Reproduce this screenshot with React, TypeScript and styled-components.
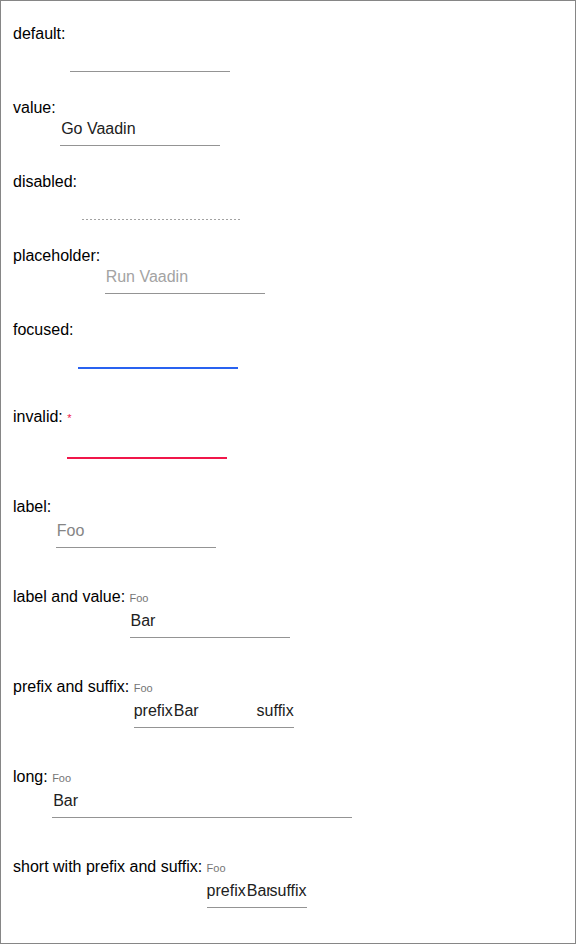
import React from "react";
import styled, { createGlobalStyle, css } from "styled-components";

const GlobalStyle = createGlobalStyle`
  html, body { margin: 0; padding: 0; background: #fff; }
  body { font-family: "Liberation Sans", Arial, sans-serif; }
`;

const Page = styled.div`
  box-sizing: border-box;
  width: 576px;
  height: 944px;
  border: 1px solid #868686;
  padding: 23px 12px 0 12px;
  display: flex;
  flex-direction: column;
  gap: 26px;
  font-family: "Liberation Sans", Arial, sans-serif;
  font-size: 16px;
  line-height: 20px;
  color: #000;
`;

const Row = styled.div<{ $labeled: boolean }>`
  display: flex;
  align-items: flex-start;
  gap: 0.278em;
  padding-top: ${(p) => (p.$labeled ? 13 : 0)}px;
`;

const RowTitle = styled.span`
  white-space: nowrap;
  line-height: 20px;
`;

const Field = styled.div<{ $width: number }>`
  display: flex;
  flex-direction: column;
  width: ${(p) => p.$width}px;
  flex: none;
`;

const FieldLabel = styled.div`
  height: 20px;
  line-height: 20px;
  font-size: 16px;
  white-space: nowrap;
`;

const SmallLabel = styled.span`
  font-size: 11px;
  line-height: 1;
  color: #757575;
`;

const Required = styled.span`
  font-size: 11px;
  line-height: 1;
  color: #f0174a;
`;

type Tone = "normal" | "focused" | "invalid" | "disabled";

const InputRow = styled.div<{ $tone: Tone; $labeled: boolean }>`
  display: flex;
  align-items: center;
  padding-top: ${(p) => (p.$labeled ? 4 : 1)}px;
  padding-bottom: 6px;
  border-bottom: 1px solid #949494;
  color: #212121;
  ${(p) =>
    p.$tone === "focused" &&
    css`
      border-bottom-color: #2962f0;
      box-shadow: 0 1px 0 #2962f0;
    `}
  ${(p) =>
    p.$tone === "invalid" &&
    css`
      border-bottom-color: #f0174a;
      box-shadow: 0 1px 0 #f0174a;
    `}
  ${(p) =>
    p.$tone === "disabled" &&
    css`
      border-bottom-color: transparent;
      background-image: repeating-linear-gradient(
        to right,
        #a2a2a2 0 2px,
        transparent 2px 4px
      );
      background-origin: border-box;
      background-clip: border-box;
      background-repeat: no-repeat;
      background-position: left bottom;
      background-size: 100% 1px;
    `}
`;

const Affix = styled.span`
  flex: none;
  white-space: nowrap;
  line-height: 20px;
  color: #212121;
`;

const Input = styled.input<{ $hintColor: string }>`
  flex: 1 1 auto;
  width: 0;
  min-width: 0;
  height: 20px;
  margin: 0;
  padding: 0 0 0 1px;
  border: 0;
  outline: none;
  background: transparent;
  font: inherit;
  font-size: 16px;
  line-height: 20px;
  color: #212121;
  &::placeholder {
    color: ${(p) => p.$hintColor};
    opacity: 1;
  }
  &:disabled {
    color: #9e9e9e;
  }
`;

type Spec = {
  title: string;
  width?: number;
  value?: string;
  placeholder?: string;
  label?: string;
  floatingLabel?: string;
  prefix?: string;
  suffix?: string;
  tone?: Tone;
  required?: boolean;
};

const specs: Spec[] = [
  { title: "default" },
  { title: "value", value: "Go Vaadin" },
  { title: "disabled", tone: "disabled" },
  { title: "placeholder", placeholder: "Run Vaadin" },
  { title: "focused", tone: "focused" },
  { title: "invalid", tone: "invalid", required: true },
  { title: "label", floatingLabel: "Foo" },
  { title: "label and value", label: "Foo", value: "Bar" },
  { title: "prefix and suffix", label: "Foo", value: "Bar", prefix: "prefix", suffix: "suffix" },
  { title: "long", label: "Foo", value: "Bar", width: 300 },
  {
    title: "short with prefix and suffix",
    label: "Foo",
    value: "Bar",
    prefix: "prefix",
    suffix: "suffix",
    width: 100,
  },
];

function TextField({ spec }: { spec: Spec }) {
  const labeled = Boolean(spec.label || spec.floatingLabel || spec.required);
  const tone = spec.tone ?? "normal";
  const hint = spec.floatingLabel ?? spec.placeholder ?? "";
  const hintColor = spec.floatingLabel ? "#858585" : "#a3a3a3";
  return (
    <Row $labeled={labeled}>
      <RowTitle>{spec.title}:</RowTitle>
      <Field $width={spec.width ?? 160}>
        <FieldLabel>
          {spec.label && <SmallLabel>{spec.label}</SmallLabel>}
          {spec.required && <Required>*</Required>}
        </FieldLabel>
        <InputRow $tone={tone} $labeled={labeled}>
          {spec.prefix && <Affix>{spec.prefix}</Affix>}
          <Input
            readOnly
            value={spec.value ?? ""}
            placeholder={hint}
            $hintColor={hintColor}
            disabled={tone === "disabled"}
          />
          {spec.suffix && <Affix>{spec.suffix}</Affix>}
        </InputRow>
      </Field>
    </Row>
  );
}

export default function App() {
  return (
    <>
      <GlobalStyle />
      <Page>
        {specs.map((s) => (
          <TextField key={s.title} spec={s} />
        ))}
      </Page>
    </>
  );
}
